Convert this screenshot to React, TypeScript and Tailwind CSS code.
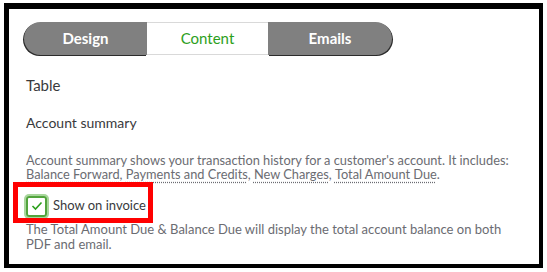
import React from "react";

const font = { fontFamily: "Lato, 'Noto Sans', sans-serif" };

const Dotted: React.FC<{ children: React.ReactNode }> = ({ children }) => (
  <span className="inline-block leading-[13px] underline decoration-dotted decoration-[#6b6c72] underline-offset-[3px]">
    {children}
  </span>
);

export default function App() {
  return (
    <div className="w-[547px] h-[272px] bg-white pt-[3px] pl-[4px]" style={font}>
      <div className="w-[539px] h-[265px] border-black border-t-[6px] border-l-[5px] border-r-[4px] border-b-[4px] bg-white pl-[15px] pr-[12px] pt-[13px]">
        <div className="flex h-[33px] w-[368px] text-[15px]">
          <div className="w-[123px] flex items-center justify-center rounded-l-full bg-[#808080] text-white font-bold shadow-[-1px_1px_0_#2b2b2b]">
            Design
          </div>
          <div className="w-[121px] flex items-center justify-center bg-white border-y border-[#d9d9d9] text-[#2ca01c]">
            Content
          </div>
          <div className="w-[124px] flex items-center justify-center rounded-r-full bg-[#808080] text-white font-bold shadow-[1px_1px_0_#2b2b2b]">
            Emails
          </div>
        </div>

        <div className="pl-[2px] text-[#393a3d]">
          <div className="mt-[20px] text-[15px] leading-5">Table</div>
          <div className="mt-[18px] text-[14px] leading-5">Account summary</div>
          <p className="mt-[20px] text-[12.8px] leading-[14px] text-[#6b6c72]">
            Account summary shows your transaction history for a customer's account. It includes:{" "}
            <Dotted>Balance Forward</Dotted>, <Dotted>Payments and Credits</Dotted>, <Dotted>New Charges</Dotted>,{" "}
            <Dotted>Total Amount Due</Dotted>.
          </p>

          <div className="relative mt-[14px] flex items-center gap-[6px] h-[22px]">
            <div className="w-[21px] h-[21px] rounded-[3px] border-2 border-[#52a43d] shadow-[0_0_0_2px_#a8d69c] flex items-center justify-center">
              <svg width="12" height="10" viewBox="0 0 12 10">
                <path d="M1.5 5 L4.5 8 L10.5 1.5" fill="none" stroke="#2ca01c" strokeWidth="1.6" />
              </svg>
            </div>
            <span className="text-[13px] text-[#393a3d]">Show on invoice</span>
            <div className="absolute left-[-13px] top-[-13px] w-[140px] h-[41px] border-[5px] border-[#ff0000]" />
          </div>

          <p className="mt-[5px] text-[13px] leading-[15px] text-[#6b6c72]">
            The Total Amount Due &amp; Balance Due will display the total account balance on both
            <br />
            PDF and email.
          </p>
        </div>
      </div>
    </div>
  );
}
